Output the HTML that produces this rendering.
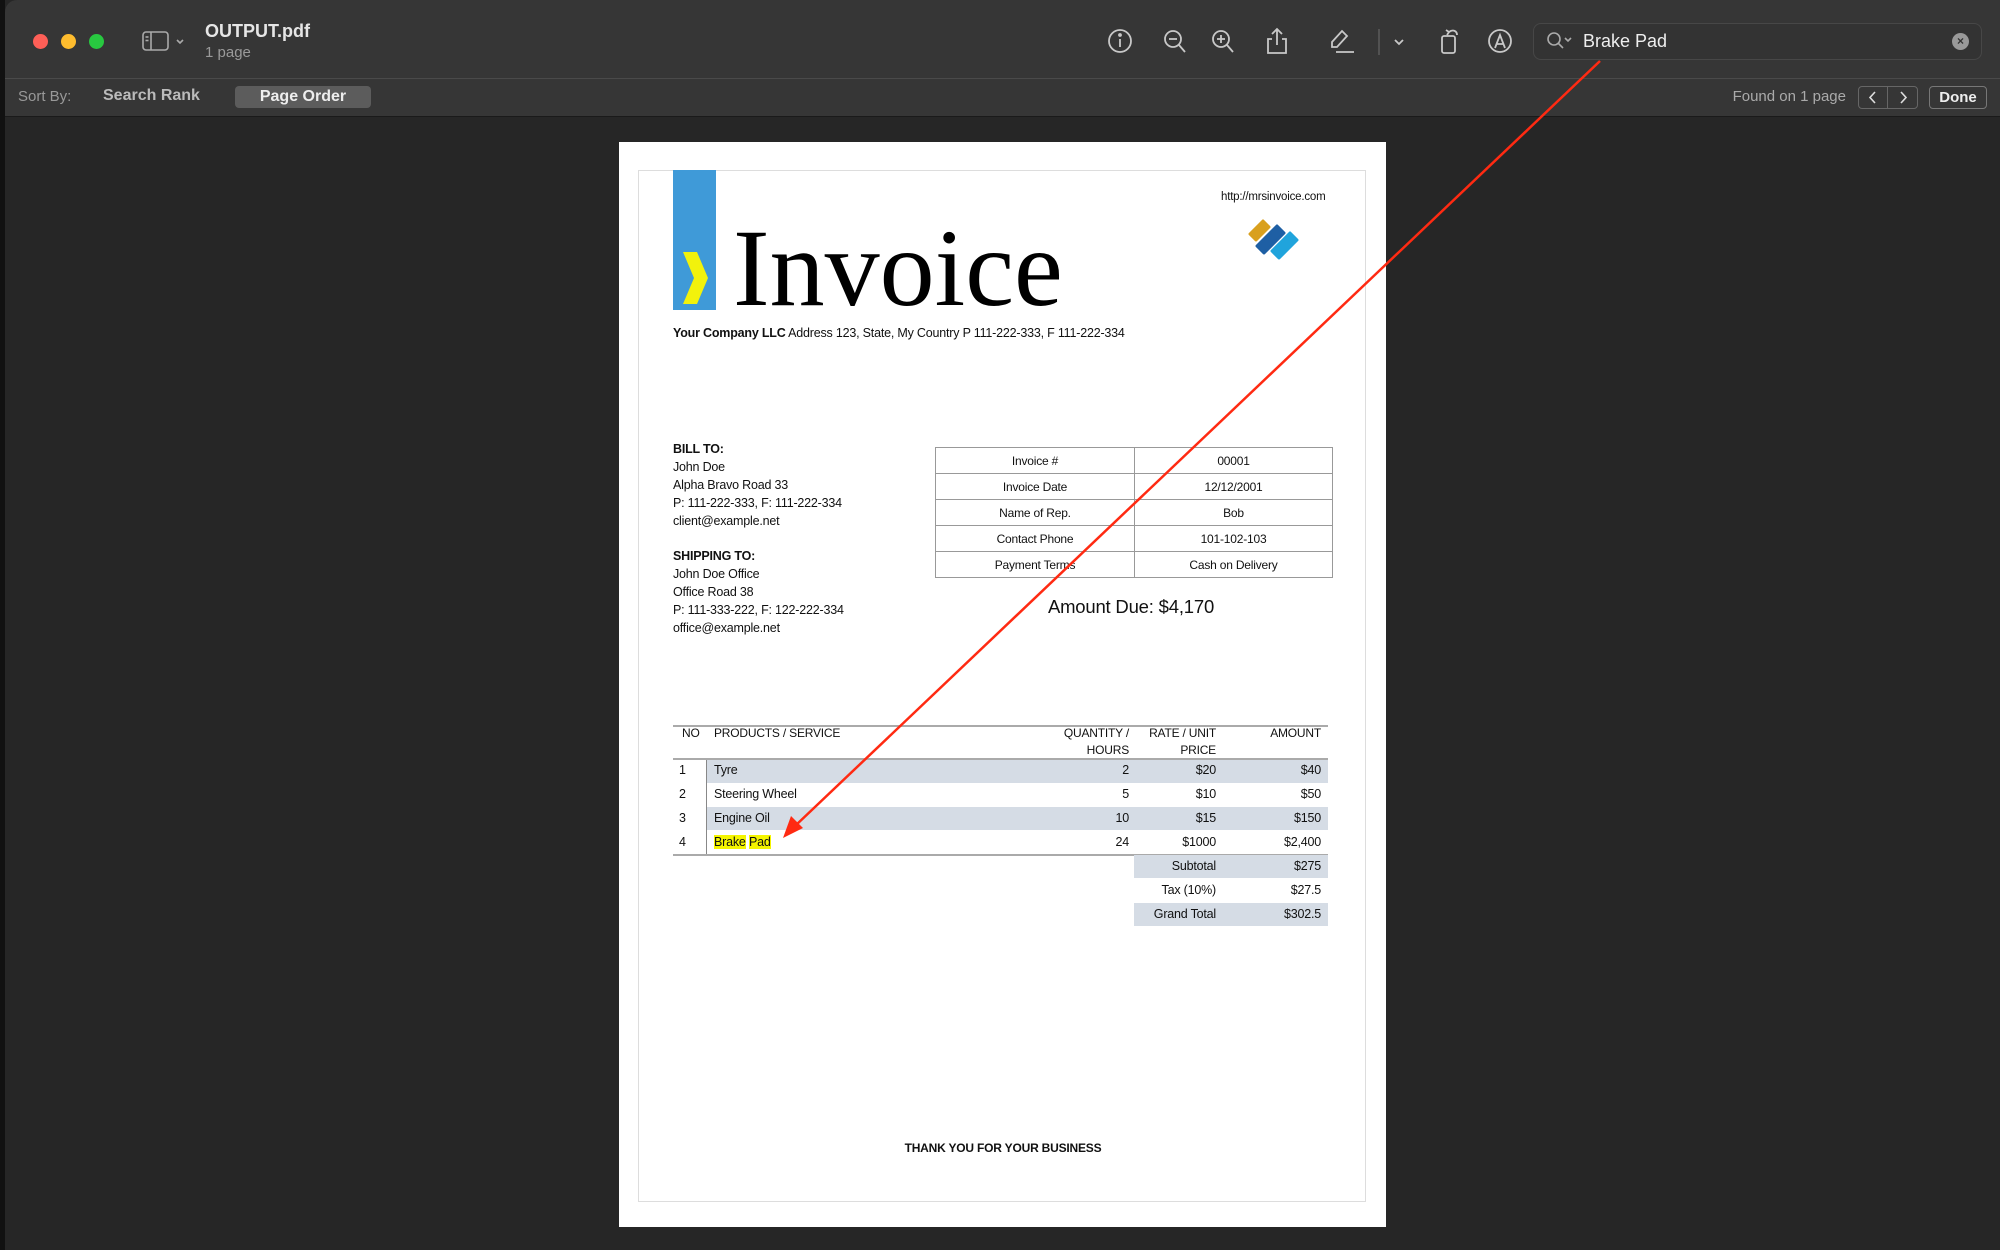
<!DOCTYPE html>
<html><head><meta charset="utf-8"><style>
*{margin:0;padding:0;box-sizing:border-box}
body{width:2000px;height:1250px;background:#262626;position:relative;overflow:hidden;font-family:"Liberation Sans",sans-serif}
.a{position:absolute;white-space:nowrap}
.tb{position:absolute;left:5px;top:0;width:1995px;height:117px;background:#363636;border-top-left-radius:12px}
.sep{position:absolute;left:5px;top:78px;width:1995px;height:1px;background:#4a4a4a}
.sep2{position:absolute;left:5px;top:116px;width:1995px;height:1px;background:#1a1a1a}
.dot{position:absolute;top:34px;width:15px;height:15px;border-radius:50%}
.ico{position:absolute;top:27px}
.p{font-family:"Liberation Sans",sans-serif;color:#111;font-size:12.5px;letter-spacing:-0.2px}
.r{text-align:right}
.c{text-align:center}
</style></head><body>
<div class="a" style="left:0;top:0;width:5px;height:1250px;background:#111"></div>
<div class="tb"></div>
<div class="sep"></div><div class="sep2"></div>
<div class="dot" style="left:33px;background:#fe5f57"></div>
<div class="dot" style="left:61px;background:#febc2e"></div>
<div class="dot" style="left:89px;background:#28c840"></div>
<svg class="ico" style="left:142px;top:30px" width="44" height="22" viewBox="0 0 44 22" fill="none" stroke="#aaa" stroke-width="1.6"><rect x="1" y="2" width="25" height="18" rx="3"/><line x1="9" y1="2" x2="9" y2="20"/><line x1="3.5" y1="7" x2="6.5" y2="7"/><line x1="3.5" y1="10.5" x2="6.5" y2="10.5"/><path d="M35 10l3 3 3-3"/></svg>
<div class="a" style="left:205px;top:21px;color:#e6e6e6;font-size:18px;font-weight:bold">OUTPUT.pdf</div>
<div class="a" style="left:205px;top:44px;color:#9a9a9a;font-size:15px">1 page</div>
<svg class="ico" style="left:1106px" width="420" height="30" viewBox="0 0 420 30" fill="none" stroke="#c8c8c8" stroke-width="1.8">
<circle cx="14" cy="14" r="11"/><line x1="14" y1="12" x2="14" y2="20"/><circle cx="14" cy="8" r="1" fill="#c8c8c8"/>
<circle cx="67" cy="12" r="8"/><line x1="63" y1="12" x2="71" y2="12"/><line x1="73" y1="18" x2="79" y2="25"/>
<circle cx="115" cy="12" r="8"/><line x1="111" y1="12" x2="119" y2="12"/><line x1="115" y1="8" x2="115" y2="16"/><line x1="121" y1="18" x2="127" y2="25"/>
<path d="M166 12h-4v14h18v-14h-4M171 2v16M166 7l5-5 5 5"/>
<path d="M236 4l5 5-10 11h-5v-5z"/><line x1="230" y1="25" x2="248" y2="25"/>
<line x1="273" y1="2" x2="273" y2="28" stroke="#555"/>
<path d="M289 13l4 4 4-4"/>
<rect x="336" y="9" width="13" height="17" rx="2"/><path d="M343 5c4-3 8-1 8 3M340 3l3 2-2 3"/>
<circle cx="394" cy="14" r="11"/><path d="M389 21l5-13 5 13M391 17h6"/>
</svg>
<div class="a" style="left:1533px;top:23px;width:449px;height:37px;border:1px solid #474747;border-radius:8px;background:#333"></div>
<svg class="a" style="left:1546px;top:31px" width="28" height="20" viewBox="0 0 28 20" fill="none" stroke="#aaa" stroke-width="1.6"><circle cx="8" cy="8" r="6"/><line x1="12" y1="12" x2="17" y2="17"/><path d="M19 7l3 3 3-3"/></svg>
<div class="a" style="left:1583px;top:31px;color:#eee;font-size:18px">Brake Pad</div>
<div class="a" style="left:1952px;top:33px;width:17px;height:17px;border-radius:50%;background:#999;color:#333;font-size:12px;line-height:17px;text-align:center;font-weight:bold">×</div>
<div class="a" style="left:18px;top:88px;color:#999;font-size:15px">Sort By:</div>
<div class="a" style="left:103px;top:87px;color:#bbb;font-size:16px;font-weight:bold">Search Rank</div>
<div class="a" style="left:235px;top:86px;width:136px;height:22px;background:#5c5c5c;border-radius:4px;color:#eee;font-size:16px;font-weight:bold;text-align:center;line-height:22px">Page Order</div>
<div class="a" style="left:1700px;top:88px;width:146px;color:#aaa;font-size:15px;text-align:right">Found on 1 page</div>
<div class="a" style="left:1858px;top:86px;width:60px;height:23px;border:1px solid #666;border-radius:4px"></div>
<div class="a" style="left:1887px;top:86px;width:1px;height:23px;background:#666"></div>
<svg class="a" style="left:1858px;top:86px" width="60" height="23" fill="none" stroke="#ddd" stroke-width="1.6"><path d="M17 6l-5 5.5 5 5.5M43 6l5 5.5-5 5.5"/></svg>
<div class="a" style="left:1929px;top:86px;width:58px;height:23px;border:1px solid #777;border-radius:4px;color:#eee;font-size:15px;font-weight:bold;text-align:center;line-height:21px">Done</div>

<!-- page -->
<div class="a" style="left:619px;top:142px;width:767px;height:1085px;background:#fff"></div>
<div class="a" style="left:638px;top:170px;width:728px;height:1032px;border:1px solid #ddd"></div>
<div class="a" style="left:673px;top:170px;width:43px;height:140px;background:#3f9ad8"></div>
<svg class="a" style="left:680px;top:252px" width="30" height="52"><path d="M3 0h14l11 26-11 26H3l11-26z" fill="#f2f20c"/></svg>
<div class="a" style="left:733px;top:213px;font-family:'Liberation Serif',serif;font-size:110px;line-height:110px;color:#000">Invoice</div>
<div class="a p" style="left:1221px;top:191px;font-size:11.5px">http://mrsinvoice.com</div>
<svg class="a" style="left:1247px;top:218px" width="56" height="42" stroke-linejoin="round" stroke-width="3">
<polygon points="16,3 22,9 9,22 3,16" fill="#d9a01e" stroke="#d9a01e"/>
<polygon points="30,8 37,15 17,35 10,28" fill="#1e5fa4" stroke="#1e5fa4"/>
<polygon points="43,15 50,22 32,40 25,33" fill="#20a4dc" stroke="#20a4dc"/>
</svg>
<div class="a p" style="left:673px;top:326px"><b>Your Company LLC</b> Address 123, State, My Country P 111-222-333, F 111-222-334</div>

<div class="a p" style="left:673px;top:441px;line-height:17.9px"><b>BILL TO:</b><br>John Doe<br>Alpha Bravo Road 33<br>P: 111-222-333, F: 111-222-334<br>client@example.net</div>
<div class="a p" style="left:673px;top:548px;line-height:17.9px"><b>SHIPPING TO:</b><br>John Doe Office<br>Office Road 38<br>P: 111-333-222, F: 122-222-334<br>office@example.net</div>

<table class="a p" style="left:935px;top:447px;width:398px;border-collapse:collapse;font-size:12px">
<tr><td class="c" style="border:1.5px solid #999;height:26px;width:199px">Invoice #</td><td class="c" style="border:1.5px solid #999">00001</td></tr>
<tr><td class="c" style="border:1.5px solid #999;height:26px">Invoice Date</td><td class="c" style="border:1.5px solid #999">12/12/2001</td></tr>
<tr><td class="c" style="border:1.5px solid #999;height:26px">Name of Rep.</td><td class="c" style="border:1.5px solid #999">Bob</td></tr>
<tr><td class="c" style="border:1.5px solid #999;height:26px">Contact Phone</td><td class="c" style="border:1.5px solid #999">101-102-103</td></tr>
<tr><td class="c" style="border:1.5px solid #999;height:26px">Payment Terms</td><td class="c" style="border:1.5px solid #999">Cash on Delivery</td></tr>
</table>
<div class="a p" style="left:981px;top:596px;width:300px;text-align:center;font-size:18.5px">Amount Due: $4,170</div>

<div class="a" style="left:673px;top:725px;width:655px;height:2px;background:#aaa"></div>
<div class="a p" style="left:682px;top:725px;line-height:17px;font-size:12px">NO</div>
<div class="a p" style="left:714px;top:725px;line-height:17px;font-size:12px">PRODUCTS / SERVICE</div>
<div class="a p r" style="left:1029px;width:100px;top:725px;line-height:17px;font-size:12px">QUANTITY /<br>HOURS</div>
<div class="a p r" style="left:1116px;width:100px;top:725px;line-height:17px;font-size:12px">RATE / UNIT<br>PRICE</div>
<div class="a p r" style="left:1221px;width:100px;top:725px;line-height:17px;font-size:12px">AMOUNT</div>
<div class="a" style="left:673px;top:758px;width:655px;height:2px;background:#aaa"></div>
<div class="a" style="left:707px;top:760px;width:621px;height:23px;background:#d5dce5"></div>
<div class="a" style="left:707px;top:807px;width:621px;height:23px;background:#d5dce5"></div>
<div class="a" style="left:706px;top:760px;width:1px;height:95px;background:#888"></div>
<div class="a" style="left:673px;top:854px;width:655px;height:2px;background:#aaa"></div>
<div class="a p" style="left:679px;top:758px;line-height:24px">1<br>2<br>3<br>4</div>
<div class="a p" style="left:714px;top:758px;line-height:24px">Tyre<br>Steering Wheel<br>Engine Oil<br><span style="background:#f5f500">Brake</span> <span style="background:#f5f500">Pad</span></div>
<div class="a p r" style="left:1029px;width:100px;top:758px;line-height:24px">2<br>5<br>10<br>24</div>
<div class="a p r" style="left:1116px;width:100px;top:758px;line-height:24px">$20<br>$10<br>$15<br>$1000</div>
<div class="a p r" style="left:1221px;width:100px;top:758px;line-height:24px">$40<br>$50<br>$150<br>$2,400</div>
<div class="a" style="left:1134px;top:855px;width:194px;height:23px;background:#d5dce5"></div>
<div class="a" style="left:1134px;top:903px;width:194px;height:23px;background:#d5dce5"></div>
<div class="a p r" style="left:1116px;width:100px;top:854px;line-height:24px">Subtotal<br>Tax (10%)<br>Grand Total</div>
<div class="a p r" style="left:1221px;width:100px;top:854px;line-height:24px">$275<br>$27.5<br>$302.5</div>
<div class="a p" style="left:853px;width:300px;top:1141px;text-align:center;font-weight:bold;font-size:12px">THANK YOU FOR YOUR BUSINESS</div>

<svg class="a" style="left:0;top:0" width="2000" height="1250"><line x1="1600" y1="61" x2="795" y2="826" stroke="#ff2a12" stroke-width="2.5"/><path d="M783 838l8-22 12 12z" fill="#ff2a12"/></svg>
</body></html>
